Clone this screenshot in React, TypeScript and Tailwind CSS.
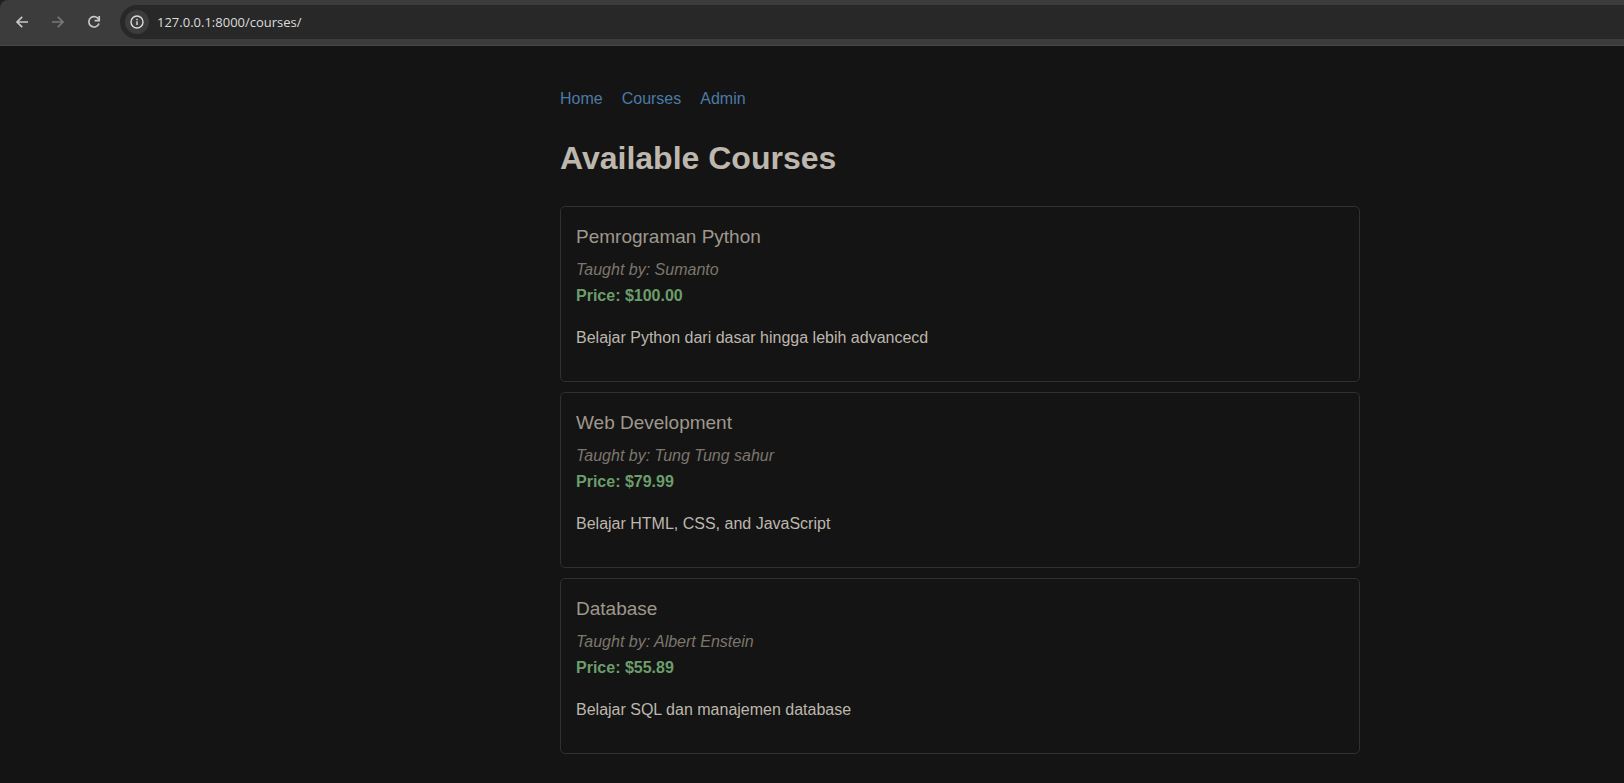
import { useState } from 'react';

type Course = {
  title: string;
  instructor: string;
  price: string;
  description: string;
};

const courses: Course[] = [
  {
    title: 'Pemrograman Python',
    instructor: 'Sumanto',
    price: '100.00',
    description: 'Belajar Python dari dasar hingga lebih advancecd',
  },
  {
    title: 'Web Development',
    instructor: 'Tung Tung sahur',
    price: '79.99',
    description: 'Belajar HTML, CSS, and JavaScript',
  },
  {
    title: 'Database',
    instructor: 'Albert Enstein',
    price: '55.89',
    description: 'Belajar SQL dan manajemen database',
  },
];

const links = [
  { label: 'Home', href: '/' },
  { label: 'Courses', href: '/courses/' },
  { label: 'Admin', href: '/admin/' },
];

function BackIcon() {
  return (
    <svg viewBox="0 0 16 16" className="size-4" fill="none" stroke="currentColor" strokeWidth="1.7" aria-hidden="true">
      <path d="M14 8H3.2M8.2 2.8 3 8l5.2 5.2" />
    </svg>
  );
}

function ForwardIcon() {
  return (
    <svg viewBox="0 0 16 16" className="size-4" fill="none" stroke="currentColor" strokeWidth="1.7" aria-hidden="true">
      <path d="M2 8h10.8M7.8 2.8 13 8l-5.2 5.2" />
    </svg>
  );
}

function ReloadIcon() {
  return (
    <svg viewBox="0 0 16 16" className="size-4" fill="none" stroke="currentColor" strokeWidth="1.7" aria-hidden="true">
      <path d="M12.9 5.9A5.2 5.2 0 1 0 13 9.4" />
      <path d="M13.2 2v4.6H8.6" />
    </svg>
  );
}

function InfoIcon() {
  return (
    <svg viewBox="0 0 16 16" className="size-4" fill="none" stroke="currentColor" strokeWidth="1.4" aria-hidden="true">
      <circle cx="8" cy="8" r="6" />
      <path d="M8 7.2v3.9M8 4.7v1.5" />
    </svg>
  );
}

function BrowserBar() {
  const [url, setUrl] = useState('127.0.0.1:8000/courses/');
  return (
    <div className="bg-[#1f1f1f]">
      <div className="flex items-start rounded-tl-lg border-b border-[#474747] bg-[#3c3c3c] pt-[5px] pb-[6px] pl-[5px]">
        <div className="flex h-[34px] items-center gap-0.5 pr-[9px]">
          <button type="button" aria-label="Back" className="grid size-[34px] place-items-center rounded-full text-[#c7c7c7]">
            <BackIcon />
          </button>
          <button type="button" aria-label="Forward" disabled className="grid size-[34px] place-items-center rounded-full text-[#777777]">
            <ForwardIcon />
          </button>
          <button type="button" aria-label="Reload" className="grid size-[34px] place-items-center rounded-full text-[#c7c7c7]">
            <ReloadIcon />
          </button>
        </div>
        <div className="flex h-[34px] min-w-0 flex-1 items-center gap-2 rounded-l-full bg-[#282828] pl-[5px]">
          <button type="button" aria-label="View site information" className="grid size-6 shrink-0 place-items-center rounded-full bg-[#3c3c3c] text-[#dcdcdc]">
            <InfoIcon />
          </button>
          <input
            type="text"
            aria-label="Address"
            value={url}
            onChange={(event) => setUrl(event.target.value)}
            className="h-6 min-w-0 flex-1 bg-transparent font-['Open_Sans','Noto_Sans',sans-serif] text-[13px] text-[#dcdcdc] outline-none"
          />
        </div>
      </div>
    </div>
  );
}

function CourseCard({ title, instructor, price, description }: Course) {
  return (
    <li className="rounded-[5px] border border-[#303030] p-[15px]">
      <h2 className="mb-[5px] text-[19px] leading-[30px] text-[#9f988c]">{title}</h2>
      <p className="text-[#7d766c] italic">Taught by: {instructor}</p>
      <p className="font-bold text-[#6b9e6b]">Price: ${price}</p>
      <p className="mt-4 mb-[15px]">{description}</p>
    </li>
  );
}

export default function App() {
  return (
    <div className="min-h-screen bg-[#141414] font-['Liberation_Sans',Arial,sans-serif] text-[16px] leading-[26px] text-[#bdb7ad]">
      <BrowserBar />
      <div className="grid grid-cols-[560fr_minmax(0,800px)_264fr] py-10">
        <div className="col-start-2">
          <nav className="mb-5 flex gap-[19px] text-[#4b7ba6]">
            {links.map((link) => (
              <a key={link.label} href={link.href}>
                {link.label}
              </a>
            ))}
          </nav>
          <main>
            <h1 className="mb-[22px] text-[32px] leading-[52px] font-bold">Available Courses</h1>
            <ul className="flex flex-col gap-2.5">
              {courses.map((course) => (
                <CourseCard key={course.title} {...course} />
              ))}
            </ul>
          </main>
        </div>
      </div>
    </div>
  );
}
